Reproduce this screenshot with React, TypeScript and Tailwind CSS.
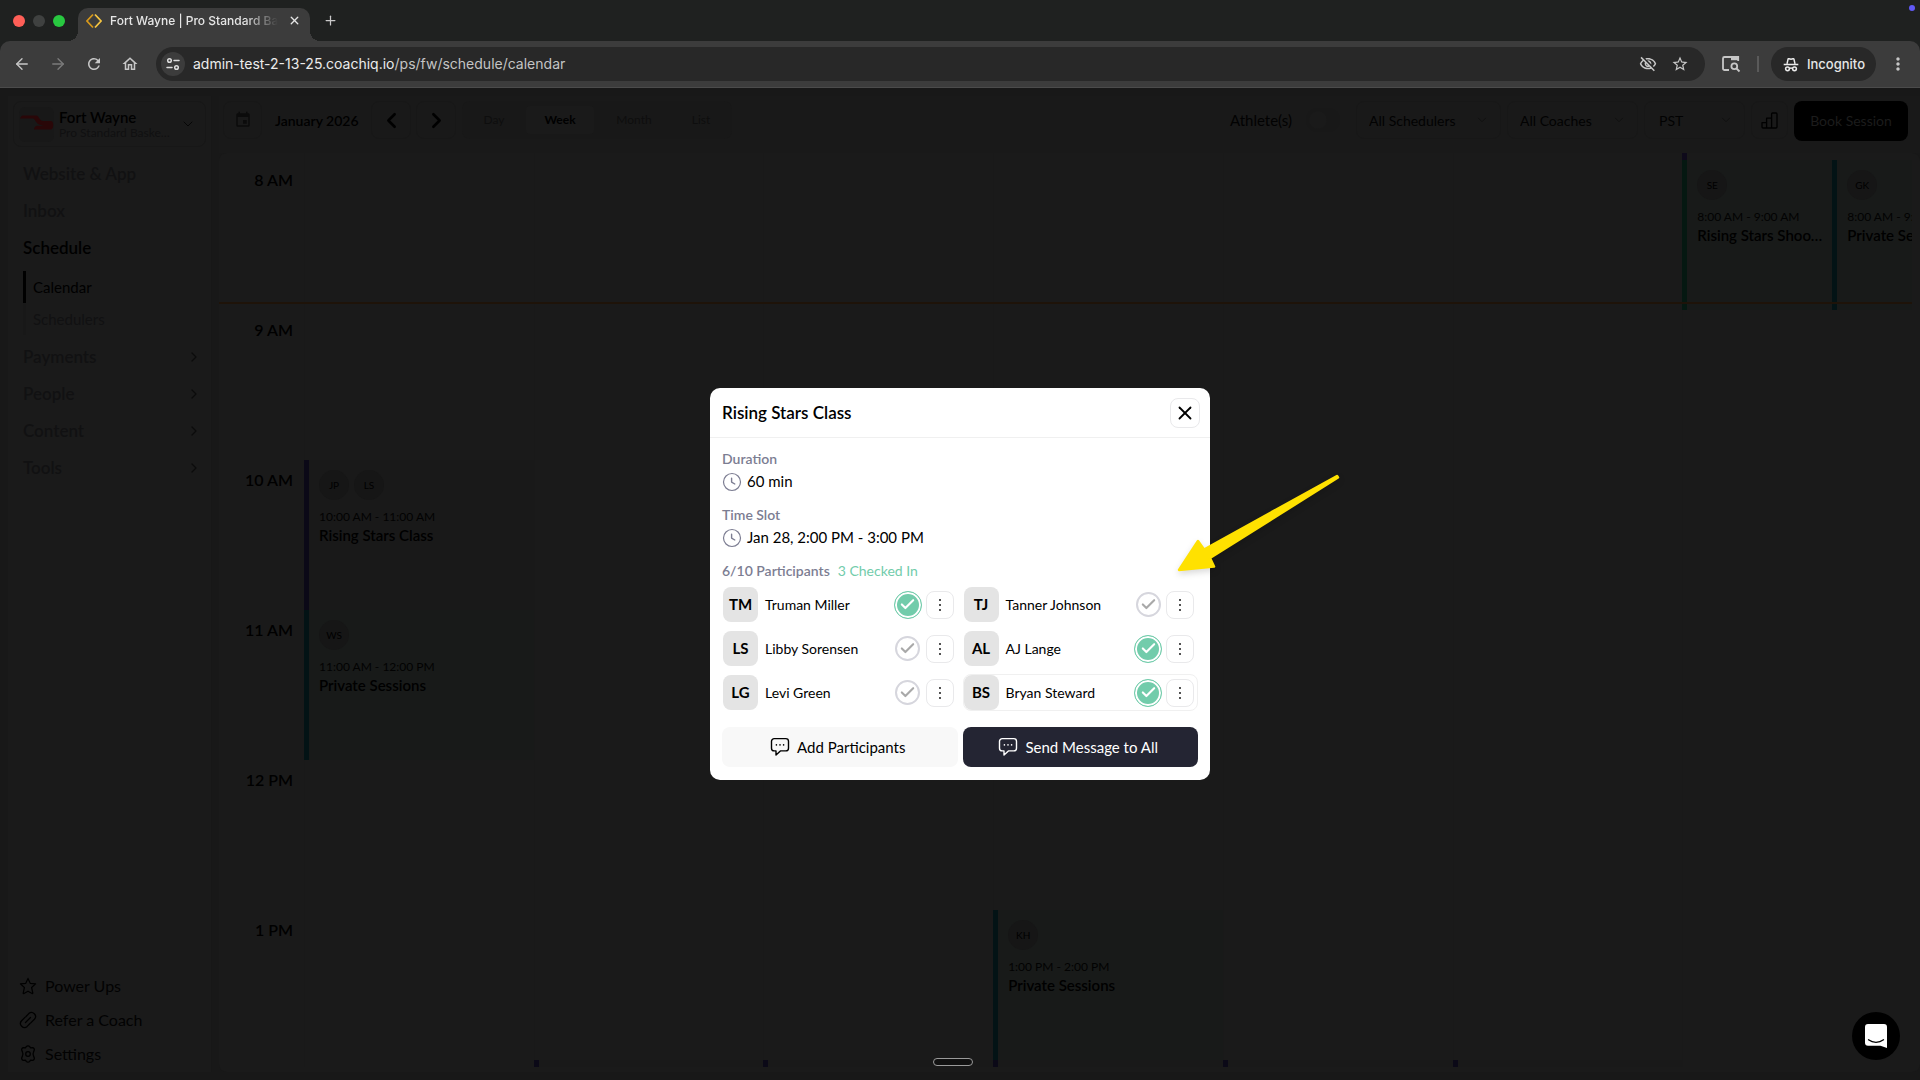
import React from "react";
import {
  ArrowLeft,
  ArrowRight,
  Check,
  ChevronDown,
  ChevronLeft,
  ChevronRight,
  Plus,
  X,
} from "lucide-react";
import {
  MdEvent,
  MdMoreVert,
  MdOutlineHome,
  MdOutlineVisibilityOff,
  MdRefresh,
  MdStarBorder,
} from "react-icons/md";

/* ---------- icons ---------- */

function ClockIcon() {
  return (
    <svg width="20" height="20" viewBox="0 0 20 20" fill="none" stroke="#7c7d92" className="shrink-0">
      <circle cx="10" cy="10" r="8.5" strokeWidth="1.2" />
      <path d="M9.6 6.2v3.9l3.2 1.9" strokeWidth="1.4" strokeLinecap="round" strokeLinejoin="round" />
    </svg>
  );
}

function MessageIcon() {
  return (
    <svg width="20" height="20" viewBox="0 0 20 20" fill="none" stroke="currentColor" className="shrink-0">
      <path
        d="M4.2 1.6h11.6a2.7 2.7 0 0 1 2.7 2.7v6.9a2.7 2.7 0 0 1-2.7 2.7H10.4L6 18.1v-4.2H4.2a2.7 2.7 0 0 1-2.7-2.7V4.3a2.7 2.7 0 0 1 2.7-2.7z"
        strokeWidth="1.4"
        strokeLinejoin="round"
      />
      <path d="M6.4 7.9h.01M10 7.9h.01M13.6 7.9h.01" strokeWidth="1.6" strokeLinecap="round" />
    </svg>
  );
}

function SiteInfoIcon() {
  return (
    <svg width="16" height="16" viewBox="0 0 16 16" fill="none" stroke="#dedede" strokeWidth="1.5" strokeLinecap="round">
      <circle cx="4.5" cy="4.5" r="1.8" />
      <path d="M9 4.5h5M2 11.5h5" />
      <circle cx="11.5" cy="11.5" r="1.8" />
    </svg>
  );
}

function TabSearchIcon() {
  return (
    <svg width="20" height="18" viewBox="0 0 20 18" fill="none" stroke="#c7c7c7" strokeWidth="1.8">
      <path d="M8 15H3.5A1.5 1.5 0 0 1 2 13.500v-10A1.5 1.5 0 0 1 3.5 2H17.200v4" />
      <path d="M10 1.2h7.5v4H10z" fill="#c7c7c7" stroke="none" />
      <circle cx="13.3" cy="11.3" r="2.9" />
      <path d="m15.5 13.5 3 3" />
    </svg>
  );
}

function IncognitoIcon() {
  return (
    <svg width="16" height="16" viewBox="0 0 16 16" fill="none" stroke="#ececec" strokeWidth="1.5">
      <path d="M4 6.8 5 2.3c.1-.5.5-.7 1-.6l2 .5 2-.5c.5-.1.9.1 1 .6l1 4.5" />
      <path d="M.7 7.5h14.6" />
      <circle cx="4.5" cy="11.8" r="1.9" />
      <circle cx="11.5" cy="11.8" r="1.9" />
      <path d="M6.400 11.400c1-.6 2.200-.6 3.200 0" />
    </svg>
  );
}

function BarsIcon() {
  return (
    <svg width="17" height="17" viewBox="0 0 17 17" fill="none" stroke="#000" strokeWidth="1.3" strokeLinejoin="round">
      <path d="M1 10.7h4.600V16H2a1 1 0 0 1-1-1zM5.600 6.200h5V16h-5zM10.600 2a1 1 0 0 1 1-1H15a1 1 0 0 1 1 1v13a1 1 0 0 1-1 1h-4.400z" />
    </svg>
  );
}

function StarIcon() {
  return (
    <svg width="18" height="18" viewBox="0 0 18 18" fill="none" stroke="#000" strokeWidth="1.2" strokeLinejoin="round">
      <path d="m9 1.400 2.200 4.900 5.400.6-4 3.600 1.200 5.500c.1.500-.3.700-.7.500L9 14.200l-4.100 2.300c-.4.200-.8 0-.7-.5l1.200-5.500-4-3.600 5.400-.6z" />
    </svg>
  );
}

function LinkIcon() {
  return (
    <svg width="18" height="18" viewBox="0 0 18 18" fill="none" stroke="#000" strokeWidth="1.3" strokeLinecap="round">
      <path d="m6.500 11.500 5-5" />
      <path d="m7 5.500 2.800-2.900a4 4 0 0 1 5.600 5.700l-3.600 3.600" />
      <path d="m11 12.500-2.800 2.900a4 4 0 0 1-5.600-5.700l3.600-3.600" />
    </svg>
  );
}

function GearIcon() {
  return (
    <svg width="18" height="18" viewBox="0 0 18 18" fill="none" stroke="#000" strokeWidth="1.3" strokeLinejoin="round">
      <path d="M7.300 1.600c.8-1 2.600-1 3.400 0l.9 1.300 1.800-.2c1.500 0 2.400 1.500 1.700 2.900L14.500 7.200c-.3.600-.3 3 0 3.600l.6 1.600c.7 1.400-.2 2.900-1.700 2.900l-1.800-.2-.9 1.300c-.8 1-2.600 1-3.400 0l-.9-1.300-1.800.2c-1.500 0-2.400-1.500-1.700-2.900l.6-1.600c.3-.6.3-3 0-3.600L2.900 5.600c-.7-1.400.2-2.900 1.700-2.900l1.800.2z" />
      <circle cx="9" cy="9" r="2.3" />
    </svg>
  );
}

/* ---------- browser chrome ---------- */

function BrowserChrome() {
  return (
    <header className="shrink-0 bg-[#1f2120] font-[Inter,sans-serif] text-[#e6e6e6]">
      <div className="relative flex h-[41px] items-end">
        <div className="flex h-[41px] w-[78px] items-center gap-2 pl-[13px]">
          <span className="size-3 rounded-full bg-[#ff5f57]" />
          <span className="size-3 rounded-full bg-[#3f4140]" />
          <span className="size-3 rounded-full bg-[#28c840]" />
        </div>
        <div className="relative flex h-[33px] w-[232px] items-center rounded-t-[10px] bg-[#3c3c3c] px-2 pb-2">
          <svg width="16" height="16" viewBox="0 0 16 16" fill="none" strokeWidth="1.8">
            <path d="M7 1.500.9 8 7 14.500" stroke="#d8991a" />
            <path d="M9 1.500 15.100 8 9 14.500" stroke="#f5c542" />
          </svg>
          <span className="ml-2 w-[168px] overflow-hidden whitespace-nowrap text-[12px] font-medium [mask-image:linear-gradient(to_right,black_80%,transparent)]">
            Fort Wayne | Pro Standard Basketball
          </span>
          <button aria-label="Close tab" className="ml-auto flex size-4 items-center justify-center">
            <X size={13} strokeWidth={2.5} />
          </button>
          <span className="absolute bottom-0 -left-[10px] size-[10px] bg-[radial-gradient(circle_at_0_0,transparent_10px,#3c3c3c_10px)]" />
          <span className="absolute bottom-0 -right-[10px] size-[10px] bg-[radial-gradient(circle_at_100%_0,transparent_10px,#3c3c3c_10px)]" />
        </div>
        <button aria-label="New tab" className="ml-3 flex h-10 w-4 items-center justify-center self-start text-[#c9c9c9]">
          <Plus size={15} strokeWidth={2} />
        </button>
        <span className="absolute top-[5px] right-[5px] size-[6px] rounded-full bg-[#6159f5]" />
      </div>
      <div className="flex h-[47px] items-center rounded-t-[10px] border-b border-[#4b4b4b] bg-[#3c3c3c] pr-3 pl-[13px]">
        <div className="flex items-center gap-[18px] text-[#c7c7c7]">
          <button aria-label="Back"><ArrowLeft size={18} strokeWidth={1.8} /></button>
          <button aria-label="Forward" className="text-[#7b7b7b]"><ArrowRight size={18} strokeWidth={1.8} /></button>
          <button aria-label="Reload"><MdRefresh size={18} /></button>
          <button aria-label="Home"><MdOutlineHome size={18} /></button>
        </div>
        <div className="ml-[17px] flex h-[34px] grow items-center rounded-full bg-[#282828] pr-4 pl-[5px]">
          <button aria-label="Site information" className="flex size-6 items-center justify-center rounded-full bg-[#3c3c3c]">
            <SiteInfoIcon />
          </button>
          <div className="relative ml-2 grow pb-px text-[14px]">
            <span aria-hidden="true" className="whitespace-nowrap">
              <span className="text-[#ececec]">admin-test-2-13-25.coachiq.io</span>
              <span className="text-[#c4c4c4]">/ps/fw/schedule/calendar</span>
            </span>
            <input
              aria-label="Address"
              className="absolute inset-0 w-full bg-transparent outline-none"
            />
          </div>
          <button aria-label="Tracking protection" className="text-[#c7c7c7]"><MdOutlineVisibilityOff size={18} /></button>
          <button aria-label="Bookmark" className="ml-[14px] text-[#c7c7c7]"><MdStarBorder size={18} /></button>
        </div>
        <button aria-label="Search tabs" className="ml-4"><TabSearchIcon /></button>
        <span className="ml-4 h-4 w-0.5 bg-[#5a5a5a]" />
        <button className="ml-3 flex h-[34px] w-[105px] items-center gap-2 rounded-full bg-[#282828] pt-0.5 pl-3 text-[13px] font-medium">
          <IncognitoIcon />
          Incognito
        </button>
        <button aria-label="Menu" className="ml-3 text-[#c7c7c7]"><MdMoreVert size={20} /></button>
      </div>
    </header>
  );
}

/* ---------- sidebar ---------- */

function NavLink({ label, active = false, arrow = false }: { label: string; active?: boolean; arrow?: boolean }) {
  return (
    <a
      href="#"
      className={
        "flex h-[37px] items-center justify-between pr-1 pl-[10px] text-[17px] font-semibold " +
        (active ? "text-black" : "text-[#111112]")
      }
    >
      {label}
      {arrow && <ChevronRight size={16} strokeWidth={1.8} className="text-[#0b0b0b]" />}
    </a>
  );
}

function Sidebar() {
  return (
    <aside className="flex w-[204px] shrink-0 flex-col border-r border-[#171717] bg-[#1a1a1a] px-[5px] pt-[5px] pb-px">
      <button className="flex h-[46px] items-center rounded-lg border border-[#171717] px-[5px] text-left">
        <svg width="35" height="35" viewBox="0 0 35 35" className="shrink-0">
          <rect width="35" height="35" rx="6" fill="#181818" />
          <path d="M1 11.500C2 9 3 8.500 5 8.500h12c3 0 3.500 5.500 7 5.500h8c3 0 3 8 0 8.500H15c0-2 1.500-3.700 3.500-3.700h7c-5-1-7-1-9.500-5.500-.8-1.500-1.500-1.800-3-1.800z" fill="#290708" />
        </svg>
        <span className="ml-[5px] w-[113px]">
          <span className="block text-[15px] leading-4 font-semibold text-black">Fort Wayne</span>
          <span className="block truncate text-[12px] leading-[15px] text-[#101011]">Pro Standard Basketball</span>
        </span>
        <ChevronDown size={16} strokeWidth={1.5} className="ml-2 shrink-0 text-[#060606]" />
      </button>
      <nav className="mt-2">
        <NavLink label="Website & App" />
        <NavLink label="Inbox" />
        <NavLink label="Schedule" active />
        <div className="mt-[5px] mb-[3px] ml-[10px]">
          <a href="#" className="flex h-8 items-center border-l-[3px] border-black pl-[7px] text-[15px] text-black">Calendar</a>
          <a href="#" className="flex h-8 items-center border-l-[3px] border-[#181818] pl-[7px] text-[15px] text-[#111112]">Schedulers</a>
        </div>
        <NavLink label="Payments" arrow />
        <NavLink label="People" arrow />
        <NavLink label="Content" arrow />
        <NavLink label="Tools" arrow />
      </nav>
      <nav className="mt-auto pl-[6px] text-[16px] text-[#020202]">
        <a href="#" className="flex h-[34px] items-center gap-2"><StarIcon />Power Ups</a>
        <a href="#" className="flex h-[34px] items-center gap-2"><LinkIcon />Refer a Coach</a>
        <a href="#" className="flex h-[34px] items-center gap-2"><GearIcon />Settings</a>
      </nav>
    </aside>
  );
}

/* ---------- schedule toolbar ---------- */

function Picker({ label, width, pad }: { label: string; width: string; pad: string }) {
  return (
    <div className={"relative h-[38px] " + width}>
      <select
        aria-label={label}
        className={"size-full appearance-none rounded-lg border border-[#171717] bg-transparent text-[14px] text-[#020202] " + pad}
      >
        <option>{label}</option>
      </select>
      <ChevronDown size={14} strokeWidth={1.5} className="pointer-events-none absolute top-3 right-3 text-[#0f0f0f]" />
    </div>
  );
}

function Toolbar() {
  const square = "flex h-[38px] items-center justify-center rounded-lg border border-[#171717]";
  return (
    <div className="flex h-[57px] shrink-0 items-start bg-[#191919] pt-[5px] pr-3 pl-1">
      <button aria-label="Pick date" className={square + " w-[39px]"}><MdEvent size={18} color="#0b0b0b" /></button>
      <span className="ml-[13px] flex h-[38px] w-[84px] items-center whitespace-nowrap text-[14px] font-semibold text-black">January 2026</span>
      <button aria-label="Previous week" className={square + " ml-3 w-10"}><ChevronLeft size={25} strokeWidth={2.5} className="text-black" /></button>
      <button aria-label="Next week" className={square + " ml-[5px] w-10"}><ChevronRight size={25} strokeWidth={2.5} className="text-black" /></button>
      <div className="ml-[6px] flex h-[38px] w-[270px] items-center rounded-lg bg-[#181818] text-[12px] text-[#0e0e0e]">
        <button className="h-7 w-16">Day</button>
        <button className="h-7 w-[68px] rounded bg-[#1a1a1a] font-bold text-black">Week</button>
        <button className="h-7 w-20">Month</button>
        <button className="h-7 w-[54px]">List</button>
      </div>
      <div className="ml-auto flex h-[38px] items-center">
        <label className="mr-4 flex items-center gap-[14px] text-[15px] text-[#020202]">
          Athlete(s)
          <input type="checkbox" className="h-6 w-[34px] appearance-none rounded-full bg-[#181818] bg-[radial-gradient(circle_at_12px_12px,#1a1a1a_8px,transparent_9px)]" />
        </label>
        <Picker label="All Schedulers" width="w-[145px]" pad="pl-3" />
        <span className="w-[6px]" />
        <Picker label="All Coaches" width="w-[131px]" pad="pl-3" />
        <span className="w-[6px]" />
        <Picker label="PST" width="w-[101px]" pad="pl-[14px]" />
        <button aria-label="Reports" className={square + " ml-[6px] w-[37px]"}><BarsIcon /></button>
        <button className="ml-[6px] h-10 w-[114px] self-start rounded-lg bg-black pb-0.5 text-[14px] whitespace-nowrap text-[#1c1c1c]">Book Session</button>
      </div>
    </div>
  );
}

/* ---------- calendar ---------- */

type Session = { people: string[]; time: string; title: string; tone: string };

const indigo = "border-[#0b0917] bg-[#191919]";
const teal = "border-[#031315] bg-[#181a19]";
const green = "border-[#051811] bg-[#181a19]";

const sessions: Record<string, Session[]> = {
  "0-10": [{ people: ["JP", "LS"], time: "10:00 AM - 11:00 AM", title: "Rising Stars Class", tone: indigo }],
  "0-11": [{ people: ["WS"], time: "11:00 AM - 12:00 PM", title: "Private Sessions", tone: teal }],
  "3-13": [{ people: ["KH"], time: "1:00 PM - 2:00 PM", title: "Private Sessions", tone: teal }],
  "6-8": [
    { people: ["SE"], time: "8:00 AM - 9:00 AM", title: "Rising Stars Shooting", tone: green },
    { people: ["GK"], time: "8:00 AM - 9:00 AM", title: "Private Sessions", tone: teal },
  ],
};

const hours = [8, 9, 10, 11, 12, 13];
const days = [0, 1, 2, 3, 4, 5, 6];

function SessionCard({ session }: { session: Session }) {
  return (
    <article className={"h-full w-full overflow-hidden border-l-[5px] pt-[10px] pl-[10px] " + session.tone}>
      <div className="flex gap-[5px]">
        {session.people.map((p) => (
          <span key={p} className="flex size-[30px] items-center justify-center rounded-full bg-[#161616] text-[10px] text-black">
            {p}
          </span>
        ))}
      </div>
      <p className="mt-2 overflow-hidden text-[12px] leading-[18px] whitespace-nowrap text-[#020202]">{session.time}</p>
      <h3 className={"text-[15px] leading-[18px] font-semibold text-black " + (session.title.length > 18 ? "truncate pr-[10px]" : "overflow-hidden whitespace-nowrap")}>
        {session.title}
      </h3>
    </article>
  );
}

function Calendar() {
  const grid = "grid grid-cols-[85px_repeat(7,minmax(0,1fr))]";
  return (
    <section className="relative flex grow flex-col rounded-lg bg-[#1a1a1a] pr-2">
      <div className={grid + " h-[7px]"}>
        <span />
        {days.map((d) => (
          <span key={d} className={d === 6 ? "border-l-[5px] border-[#0e0a1a]" : "border-l border-[#191919]"} />
        ))}
      </div>
      {hours.map((h) => (
        <div key={h} className={grid + " h-[150px]"}>
          <div className="pt-2 pr-[11px] text-right text-[16px] leading-6 font-semibold text-black">
            {h > 12 ? h - 12 : h} {h < 12 ? "AM" : "PM"}
          </div>
          {days.map((d) => {
            const list = sessions[d + "-" + h];
            return (
              <div key={d} className={list ? "flex overflow-hidden" : "border-l border-[#191919]"}>
                {list && list.length > 1 ? (
                  <>
                    <div className="w-[150px] shrink-0"><SessionCard session={list[0]} /></div>
                    <div className="min-w-0 grow"><SessionCard session={list[1]} /></div>
                  </>
                ) : (
                  list && <SessionCard session={list[0]} />
                )}
              </div>
            );
          })}
        </div>
      ))}
      <div className={grid + " h-[7px]"}>
        <span />
        {days.map((d) => (
          <span key={d} className={d >= 1 && d <= 5 ? "border-l-[5px] border-[#0b0917] bg-[#191919]" : "border-l border-[#191919]"} />
        ))}
      </div>
      <div className="absolute top-[149px] right-2 left-0 h-0.5 bg-[#1e1309]" />
    </section>
  );
}

/* ---------- session dialog ---------- */

const participants = [
  { initials: "TM", name: "Truman Miller", checked: true },
  { initials: "TJ", name: "Tanner Johnson", checked: false },
  { initials: "LS", name: "Libby Sorensen", checked: false },
  { initials: "AL", name: "AJ Lange", checked: true },
  { initials: "LG", name: "Levi Green", checked: false },
  { initials: "BS", name: "Bryan Steward", checked: true },
];

function ParticipantRow({ initials, name, checked, outlined }: { initials: string; name: string; checked: boolean; outlined: boolean }) {
  return (
    <li className={"flex h-[37px] items-center rounded-lg border pr-[3px] " + (outlined ? "border-[#f0f0f0]" : "border-transparent")}>
      <span className="flex size-[35px] items-center justify-center rounded-lg bg-[#e4e4e4] text-[15px] font-bold">{initials}</span>
      <span className="ml-[7px] text-[14px]">{name}</span>
      <span className="relative ml-auto flex size-7 items-center justify-center">
        <input
          type="checkbox"
          aria-label={"Check in " + name}
          defaultChecked={checked}
          className={
            checked
              ? "size-7 appearance-none rounded-full border border-[#72ccab] bg-[#72ccab] shadow-[inset_0_0_0_2px_#fff]"
              : "size-[25px] appearance-none rounded-full border-2 border-[#d6d6dd] bg-white"
          }
        />
        <Check
          size={17}
          strokeWidth={3}
          className={"pointer-events-none absolute " + (checked ? "text-white" : "text-[#a9a9a9]")}
        />
      </span>
      <button
        aria-label={"More actions for " + name}
        className="ml-1 flex size-7 items-center justify-center rounded-lg border border-[#e9e9eb] text-black"
      >
        <svg width="4" height="14" viewBox="0 0 4 14" fill="currentColor">
          <circle cx="2" cy="2" r="0.9" />
          <circle cx="2" cy="7" r="0.9" />
          <circle cx="2" cy="12" r="0.9" />
        </svg>
      </button>
    </li>
  );
}

function Field({ label, value }: { label: string; value: string }) {
  return (
    <div className="mb-[11px]">
      <dt className="text-[14px] leading-[22px] font-semibold text-[#7c7d92]">{label}</dt>
      <dd className="flex h-[23px] items-center gap-[5px] text-[15px]"><ClockIcon />{value}</dd>
    </div>
  );
}

function SessionDialog() {
  const action = "flex h-10 items-center justify-center gap-[7px] rounded-lg pr-1";
  return (
    <div role="dialog" aria-labelledby="session-title" className="w-[500px] rounded-[10px] bg-white text-black">
      <div className="flex h-[50px] items-center justify-between border-b border-[#f0f0f0] pr-[10px] pl-3">
        <h2 id="session-title" className="text-[17px] font-semibold">Rising Stars Class</h2>
        <button aria-label="Close" className="flex size-[30px] items-center justify-center rounded-lg border border-[#e9e9eb]">
          <X size={22} strokeWidth={2} />
        </button>
      </div>
      <div className="px-3 pt-[10px] pb-[13px]">
        <dl>
          <Field label="Duration" value="60 min" />
          <Field label="Time Slot" value="Jan 28, 2:00 PM - 3:00 PM" />
        </dl>
        <p className="flex gap-2 text-[14px] leading-[22px]">
          <span className="font-semibold text-[#7c7d92]">6/10 Participants</span>
          <span className="text-[#72ccab]">3 Checked In</span>
        </p>
        <ul className="mt-1 grid grid-cols-2 gap-x-[5px] gap-y-[7px]">
          {participants.map((p, i) => (
            <ParticipantRow key={p.initials} {...p} outlined={i === 5} />
          ))}
        </ul>
        <div className="mt-4 grid grid-cols-2 gap-[5px] text-[15px]">
          <button className={action + " bg-[#f8f8f8]"}><MessageIcon />Add Participants</button>
          <button className={action + " bg-[#242533] text-white"}><MessageIcon />Send Message to All</button>
        </div>
      </div>
    </div>
  );
}

export default function App() {
  return (
    <div className="flex min-h-screen flex-col overflow-hidden">
      <BrowserChrome />
      <main className="relative flex grow bg-[#181818] font-[Lato,sans-serif]">
        <div className="flex min-w-0 grow gap-[7px] pt-2 pb-2 pl-2">
          <Sidebar />
          <div className="flex min-w-0 grow flex-col">
            <Toolbar />
            <Calendar />
          </div>
        </div>
        <div className="absolute inset-0 flex items-center justify-center">
          <SessionDialog />
        </div>
        <svg
          width="170"
          height="110"
          viewBox="0 0 170 110"
          className="pointer-events-none absolute top-[380px] left-[1174px] drop-shadow-[0_3px_3px_rgba(0,0,0,0.15)]"
        >
          <path
            d="M5 102 24 73 30 81.500 163 8 164 9.500 36 90 40 98.500z"
            fill="#ffe100"
            stroke="#ffe100"
            strokeWidth="2.5"
            strokeLinejoin="round"
          />
        </svg>
        <div className="absolute bottom-[14px] left-[933px] h-2 w-10 rounded-full border border-[#9a9a9a] bg-[#111]" />
        <button aria-label="Open chat" className="absolute right-5 bottom-5 flex size-12 items-center justify-center rounded-full bg-black">
          <svg width="22" height="24" viewBox="0 0 22 24">
            <path d="M3 0h16a3 3 0 0 1 3 3v21l-6.500-2.300H3a3 3 0 0 1-3-3V3a3 3 0 0 1 3-3z" fill="#fff" />
            <path d="M3.500 15.800c4.500 3.300 10.500 3.300 15 0" stroke="#000" strokeWidth="1.3" strokeLinecap="round" fill="none" />
          </svg>
        </button>
      </main>
    </div>
  );
}
